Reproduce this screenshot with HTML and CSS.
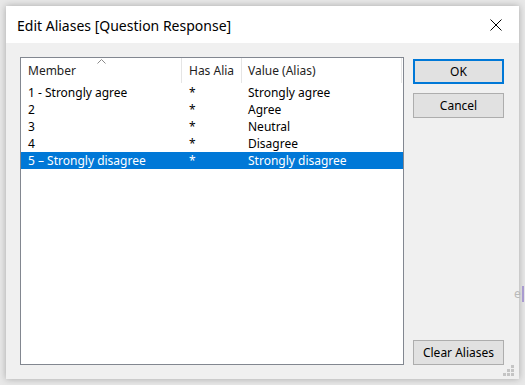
FILE: index.html
```html
<!DOCTYPE html>
<html lang="en">
<head>
    <meta charset="UTF-8">
    <title>Edit Aliases [Question Response]</title>
    <link rel="stylesheet" href="styles.css">
</head>
<body>
    <div class="dialog">
        <div class="titlebar">
            <span class="title">Edit Aliases [Question Response]</span>
            <span class="close">
                <svg width="12" height="12" viewBox="0 0 12 12">
                    <path d="M0.5,0.5 L11.5,11.5 M11.5,0.5 L0.5,11.5" stroke="#000" stroke-width="1" fill="none"/>
                </svg>
            </span>
        </div>
        <div class="content">
            <div class="listbox">
                <div class="row header">
                    <div class="cell c-member">Member
                        <svg class="sort" width="9" height="5" viewBox="0 0 9 5">
                            <path d="M0.5,4.5 L4.5,0.5 L8.5,4.5" stroke="#8a8a8a" fill="none"/>
                        </svg>
                    </div>
                    <div class="cell c-has">Has Alia</div>
                    <div class="cell c-value">Value (Alias)</div>
                </div>
                <div class="row">
                    <div class="cell c-member">1 - Strongly agree</div>
                    <div class="cell c-has">*</div>
                    <div class="cell c-value">Strongly agree</div>
                </div>
                <div class="row">
                    <div class="cell c-member">2</div>
                    <div class="cell c-has">*</div>
                    <div class="cell c-value">Agree</div>
                </div>
                <div class="row">
                    <div class="cell c-member">3</div>
                    <div class="cell c-has">*</div>
                    <div class="cell c-value">Neutral</div>
                </div>
                <div class="row">
                    <div class="cell c-member">4</div>
                    <div class="cell c-has">*</div>
                    <div class="cell c-value">Disagree</div>
                </div>
                <div class="row selected">
                    <div class="cell c-member">5 &ndash; Strongly disagree</div>
                    <div class="cell c-has">*</div>
                    <div class="cell c-value">Strongly disagree</div>
                </div>
            </div>
            <div class="buttons">
                <button class="btn default">OK</button>
                <button class="btn">Cancel</button>
                <div class="spacer"></div>
                <button class="btn">Clear Aliases</button>
            </div>
        </div>
        <svg class="grip" width="11" height="11" viewBox="0 0 11 11">
            <rect x="8" y="0" width="3" height="3" fill="#c4c4c4"/>
            <rect x="4" y="4" width="3" height="3" fill="#c4c4c4"/>
            <rect x="8" y="4" width="3" height="3" fill="#c4c4c4"/>
            <rect x="0" y="8" width="3" height="3" fill="#c4c4c4"/>
            <rect x="4" y="8" width="3" height="3" fill="#c4c4c4"/>
            <rect x="8" y="8" width="3" height="3" fill="#c4c4c4"/>
        </svg>
    </div>
    <span class="behind">e</span>
</body>
</html>
```

FILE: styles.css
```css
body {
    margin: 0;
    width: 525px;
    height: 385px;
    background-color: #e8e8e8;
    font-family: "Noto Sans", "Open Sans", sans-serif;
    font-size: 12px;
    color: #000;
    padding: 6px;
    box-sizing: border-box;
    position: relative;
    overflow: hidden;
}
.dialog {
    position: relative;
    width: 513px;
    height: 373px;
    background-color: #f0f0f0;
    box-shadow: 0 0 7px rgba(0,0,0,0.28);
    display: flex;
    flex-direction: column;
}
.titlebar {
    height: 37px;
    background-color: #fff;
    display: flex;
    align-items: center;
    justify-content: space-between;
    padding-left: 11px;
}
.title {
    font-size: 14px;
    color: #000;
    margin-top: 1px;
}
.close {
    width: 46px;
    height: 37px;
    display: flex;
    align-items: center;
    justify-content: center;
    margin-top: 1px;
}
.content {
    flex: 1;
    display: flex;
    padding: 14px 15px 14px 14px;
    gap: 9px;
}
.listbox {
    width: 382px;
    height: 306px;
    border: 1px solid #828790;
    background-color: #fff;
    display: flex;
    flex-direction: column;
}
.row {
    display: flex;
    height: 17px;
    line-height: 17px;
}
.row.header {
    height: 26px;
    line-height: 26px;
    color: #1e1e1e;
}
.cell {
    white-space: nowrap;
    overflow: hidden;
    box-sizing: border-box;
}
.c-member {
    width: 161px;
    padding-left: 7px;
    position: relative;
}
.c-has {
    width: 60px;
    padding-left: 7px;
}
.c-value {
    width: 160px;
    padding-left: 6px;
}
.header .cell {
    border-right: 1px solid #e5e5e5;
    height: 25px;
}
.sort {
    position: absolute;
    left: 76px;
    top: 1px;
}
.row.selected {
    background-color: #0078d7;
    color: #fff;
}
.buttons {
    width: 91px;
    display: flex;
    flex-direction: column;
    padding-top: 2px;
    gap: 9px;
}
.spacer {
    flex: 1;
}
.btn {
    height: 25px;
    background-color: #e1e1e1;
    border: 1px solid #adadad;
    font-family: "Noto Sans", "Open Sans", sans-serif;
    font-size: 12px;
    color: #000;
    padding: 0;
    margin: 0;
}
.btn.default {
    border: 2px solid #0078d7;
}
.grip {
    position: absolute;
    right: 5px;
    bottom: 3px;
}
.behind {
    position: absolute;
    left: 514px;
    top: 286px;
    font-size: 12px;
    color: #b9b9b9;
    border-right: 2px solid #a99bd0;
    line-height: 16px;
    padding-right: 1px;
}
```
